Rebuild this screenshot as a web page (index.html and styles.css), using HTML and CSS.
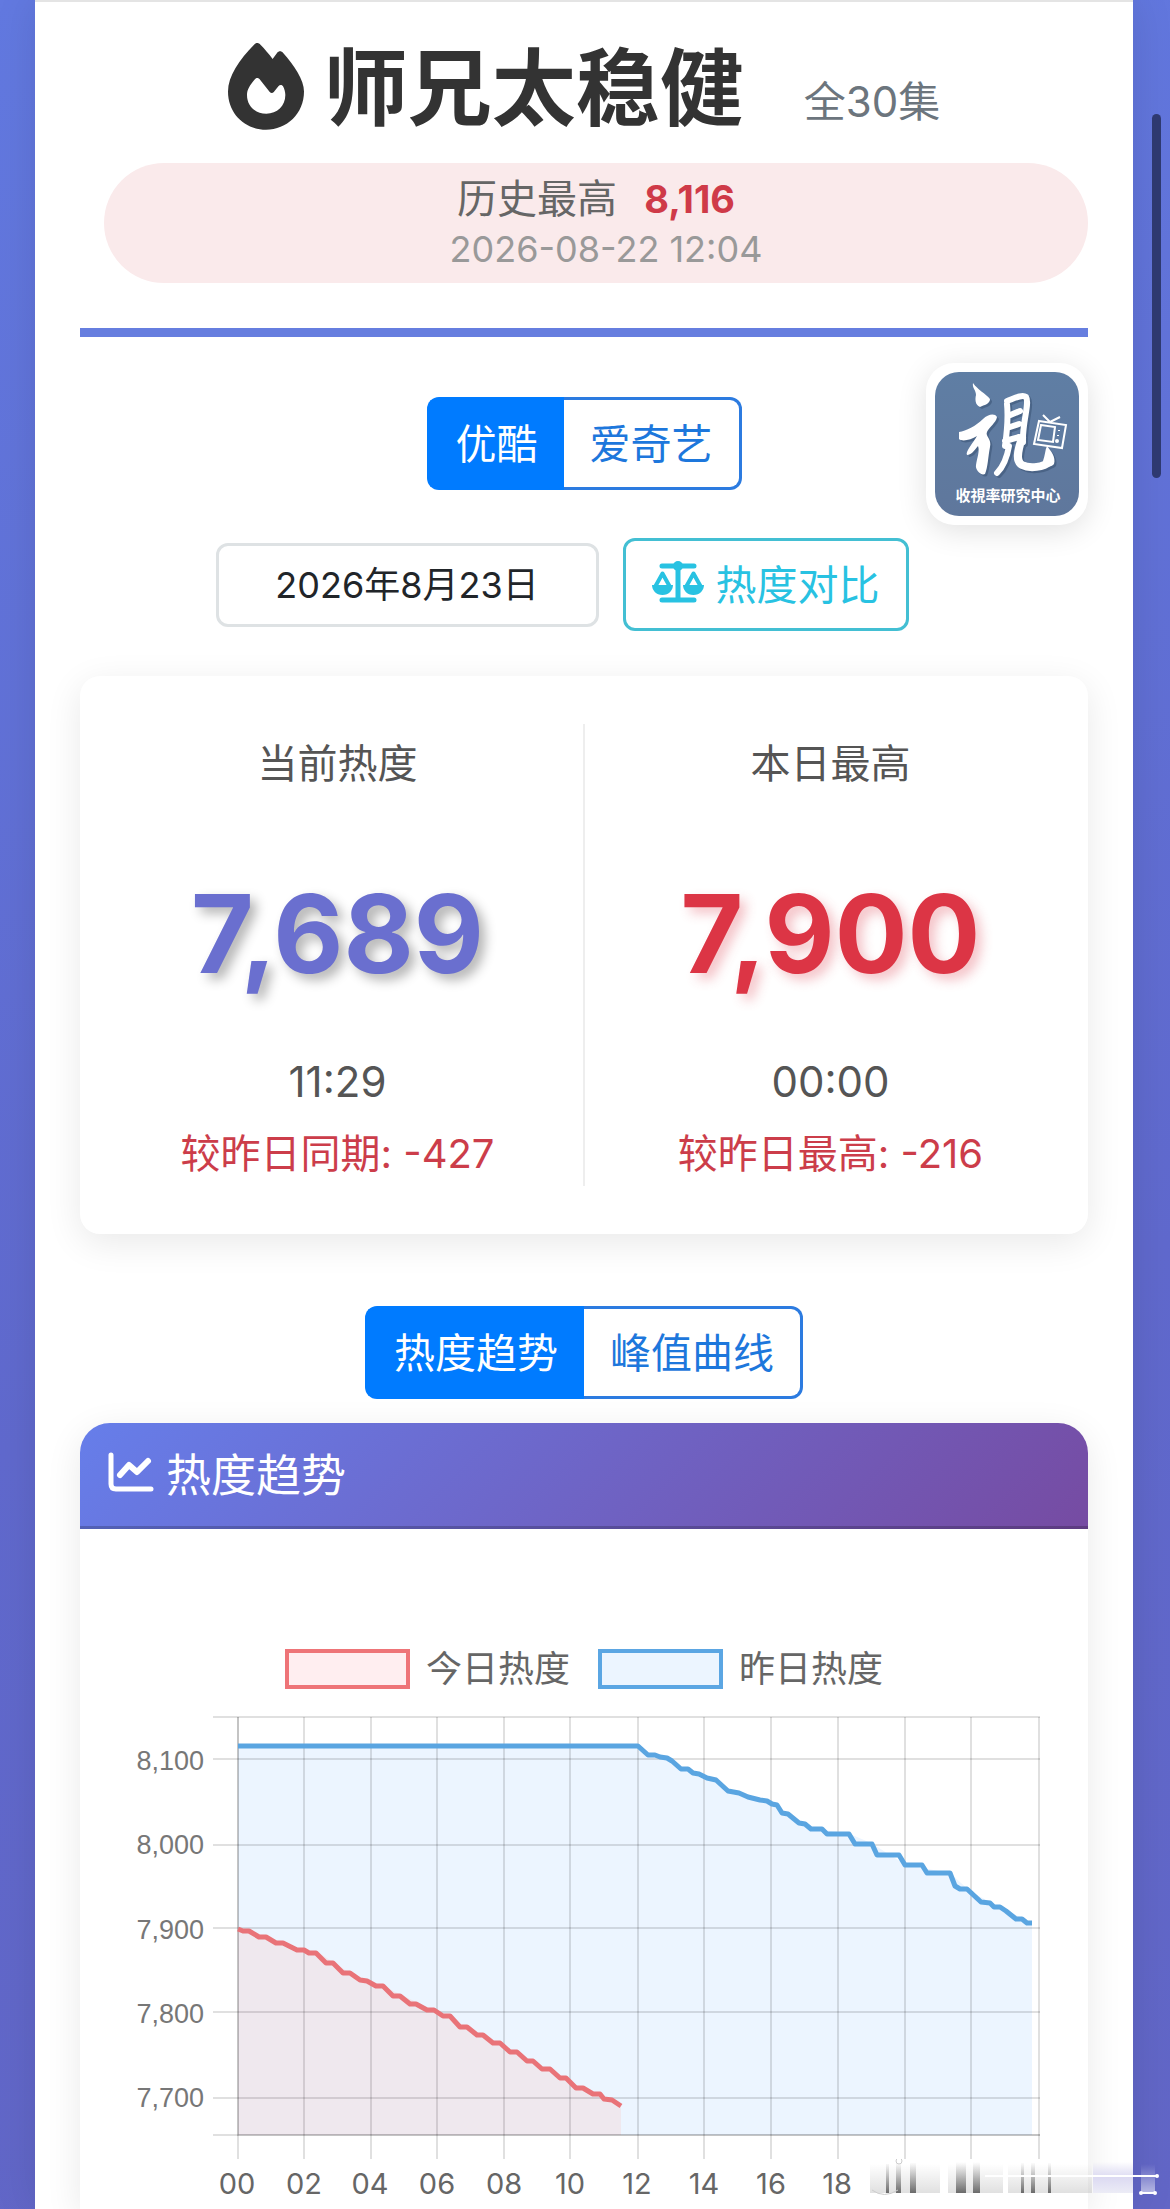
FILE: index.html
```html
<!DOCTYPE html>
<html lang="zh-CN">
<head>
<meta charset="utf-8">
<meta name="viewport" content="width=device-width">
<title>师兄太稳健 热度</title>
<link rel="stylesheet" href="styles.css">
</head>
<body>
<main class="page">
  <header class="head">
    <div class="title-row">
      <h1 class="title">
        <svg class="fire" viewBox="0 0 448 512" aria-hidden="true"><path fill="#333" fill-rule="evenodd" d="M155 9c9-12 25-12 35 0 25 26 50 54 73 85l27-37c9-12 25-12 34 0 66 73 124 160 124 229 0 131-101 225-224 225S0 418 0 286C0 196 67 98 155 9zM226 416c63 0 112-45 112-110 0-18-6-36-12-49-6-11-20-13-29-2l-27 34c-7 8-17 8-24 0l-56-72c-11-14-24-14-34-1-27 32-44 58-44 90 0 65 48 110 114 110z"/></svg>
        <span>师兄太稳健</span>
      </h1>
      <span class="episodes">全30集</span>
    </div>
    <div class="record">
      <div class="record-line">历史最高 <strong class="record-value">8,116</strong></div>
      <time class="record-time">2026-08-22 12:04</time>
    </div>
  </header>

  <section class="controls">
    <div class="segment">
      <button type="button" class="seg active">优酷</button>
      <button type="button" class="seg">爱奇艺</button>
    </div>
    <div class="filters">
      <input class="date" type="text" value="2026年8月23日" aria-label="日期">
      <button type="button" class="compare">
        <svg class="scale" viewBox="0 0 52 42" aria-hidden="true"><g fill="none" stroke="currentColor" stroke-linecap="round" stroke-linejoin="round"><path d="M10 5h32M10 39h32M26 5v33" stroke-width="5"/><path d="M3 26L10.500 12.500 18 26M34 26l7.500-13.500L49 26" stroke-width="4"/></g><g fill="currentColor"><circle cx="26" cy="5" r="5"/><path d="M0 24h21c0 5-4 10-10.500 10S0 29 0 24zM31 24h21c0 5-4 10-10.500 10S31 29 31 24z"/></g></svg>
        <span>热度对比</span>
      </button>
    </div>
    <div class="logo">
      <svg viewBox="0 0 144 144" role="img" aria-label="收視率研究中心">
        <defs><linearGradient id="lg" x1="0" y1="0" x2="0" y2="1"><stop offset="0" stop-color="#5f7ea4"/><stop offset="1" stop-color="#5f779c"/></linearGradient></defs>
        <rect width="144" height="144" rx="24" fill="url(#lg)"/>
        <use href="#brush" class="brush-shadow" x="2" y="2"/>
        <g id="brush" fill="currentColor" stroke="currentColor" stroke-linejoin="round" stroke-linecap="round">
          <path stroke="none" d="M38 11c4 6 13 11 17 16 0 5-6 6-10 8-5-2-5-8-4-12 0-5-4-7-3-12z"/>
          <path stroke="none" d="M24 60c7-1 17-6 24-13 5-5 12-6 14-2-1 6-8 10-10 15-2 4 5 7 3 15-2 10-2 20-5 27-4 2-10-4-9-9 1-7 4-14 2-19-4 5-7 9-11 9-2-3 6-12 10-19-6 4-15 6-18 3z"/>
          <path fill="none" stroke-width="6" d="M72 32c1 10 0 28-2 42M72 29c6-2 15-7 19-4 4 6-4 26-3 45M73 44l12-5M72 56l12-4M70 69l14-4M74 74c-2 12-5 20-12 27"/>
          <path fill="none" stroke-width="8" d="M87 66c-4 12-7 23 0 27 8 4 22 2 27-3"/>
          <path stroke="none" d="M108 89c2-5 2-11 4-15 4 5 9 11 7 18-3 4-9 3-11-3z"/>
        </g>
        <g fill="none" stroke="#fff" stroke-width="2"><path fill="#5e7ba1" d="M104 49l27 4-4 23-28-4zM115 50l-7-7M115 50l10-5"/><path d="M106 53l14 2-2 15-15-2z"/><path d="M124 58v1M123 63v1"/><circle cx="122" cy="69" r="1"/></g>
        <text x="73" y="129" text-anchor="middle" class="logo-text">收視率研究中心</text>
      </svg>
    </div>
  </section>

  <section class="stats">
    <div class="stat">
      <div class="label">当前热度</div>
      <div class="number now">7,689</div>
      <time class="at">11:29</time>
      <div class="diff">较昨日同期: -427</div>
    </div>
    <div class="stat">
      <div class="label">本日最高</div>
      <div class="number top">7,900</div>
      <time class="at">00:00</time>
      <div class="diff">较昨日最高: -216</div>
    </div>
  </section>

  <div class="segment tabs">
    <button type="button" class="seg active">热度趋势</button>
    <button type="button" class="seg">峰值曲线</button>
  </div>

  <section class="panel">
    <h2 class="panel-head">
      <svg class="trend" viewBox="0 0 46 40" aria-hidden="true"><g fill="none" stroke="#fff" stroke-width="5" stroke-linecap="round" stroke-linejoin="round"><path d="M3 3v29q0 5 5 5h35"/><path stroke-width="6" d="M12 23l9-10 8 7L40 9"/></g></svg>
      <span>热度趋势</span>
    </h2>
    <div class="legend">
      <span class="key"><i class="swatch today"></i>今日热度</span>
      <span class="key"><i class="swatch yesterday"></i>昨日热度</span>
    </div>
    <svg class="chart" viewBox="80 1700 1008 509" role="img" aria-label="热度趋势图">
      <path fill="#ecf5ff" d="M238 1746H638L648 1755 665 1758 681 1769 704 1778 716 1780 731 1792 771 1803 782 1813 811 1828 850 1834 871 1843 906 1865 950 1873 971 1892 1000 1907 1032 1923V2135H238z"/>
      <path fill="#efe8ee" d="M238 1929L302 1950 319 1953 350 1973 383 1986 437 2012 504 2048 570 2082 621 2106V2135H238z"/>
      <g fill="none" stroke="#000" stroke-opacity=".12" stroke-width="2">
        <path d="M213 1717H1040M213 1759H1040M213 1845H1040M213 1928H1040M213 2012H1040M213 2098H1040M213 2135H1040"/>
        <path d="M238 1717V2159M304 1717V2159M371 1717V2159M437 1717V2159M504 1717V2159M570 1717V2159M638 1717V2159M704 1717V2159M771 1717V2159M838 1717V2159M905 1717V2159M971 1717V2159M1039 1717V2159"/>
        <path d="M238 1717V2135H1040"/>
      </g>
      <path class="line blue" d="M238 1746H638L648 1755 655 1755 660 1757 667 1758 672 1761 681 1769 688 1769 693 1773 699 1774 707 1778 716 1780 728 1791 739 1793 748 1797 760 1800 767 1801 772 1804 777 1805 782 1813 788 1814 799 1823 805 1824 811 1829 822 1829 827 1834H849L855 1844H872L877 1855H899L905 1865H922L927 1873H950L955 1886 960 1889 967 1889 981 1902 990 1903 994 1907 1000 1907 1006 1911 1016 1919 1022 1919 1027 1923H1032"/>
      <path class="line red" d="M238 1929L243 1931 249 1931 259 1937 266 1937 276 1943 283 1943 297 1950 304 1950 309 1953 316 1953 326 1963 333 1963 343 1973 350 1973 360 1980 367 1981 376 1986 383 1986 393 1996 400 1996 410 2004 416 2004 427 2010 434 2010 443 2016 450 2016 460 2027 467 2027 477 2035 483 2035 493 2043 500 2043 510 2052 517 2052 527 2061 533 2061 542 2069 550 2069 560 2078 566 2078 576 2088 583 2088 593 2094 600 2094 604 2099 612 2100 621 2106"/>
      <g class="ylab"><text x="204" y="1770">8,100</text><text x="204" y="1854">8,000</text><text x="204" y="1939">7,900</text><text x="204" y="2023">7,800</text><text x="204" y="2107">7,700</text></g>
      <g class="xlab"><text x="237" y="2194">00</text><text x="304" y="2194">02</text><text x="370" y="2194">04</text><text x="437" y="2194">06</text><text x="504" y="2194">08</text><text x="570" y="2194">10</text><text x="637" y="2194">12</text><text x="704" y="2194">14</text><text x="771" y="2194">16</text><text x="837" y="2194">18</text></g>
    </svg>
  </section>
</main>
<svg class="watermark" viewBox="0 0 310 50" aria-hidden="true">
  <defs>
    <linearGradient id="fade" x1="0" y1="0" x2="0" y2="1"><stop offset="0" stop-color="#777" stop-opacity="0"/><stop offset="1" stop-color="#555" stop-opacity=".85"/></linearGradient>
    <linearGradient id="soft" x1="0" y1="0" x2="0" y2="1"><stop offset="0" stop-color="#bbb" stop-opacity="0"/><stop offset="1" stop-color="#bbb" stop-opacity=".45"/></linearGradient>
    <linearGradient id="haze" x1="0" y1="0" x2="0" y2="1"><stop offset="0" stop-color="#d8d6f0" stop-opacity="0"/><stop offset=".5" stop-color="#dcdaf2"/><stop offset="1" stop-color="#ececf6"/></linearGradient>
    <linearGradient id="glow" x1="0" y1="0" x2="0" y2="1"><stop offset="0" stop-color="#fff" stop-opacity="0"/><stop offset="1" stop-color="#fff" stop-opacity=".55"/></linearGradient>
  </defs>
  <path fill="url(#haze)" d="M233 3h40v31h-40z"/>
  <path fill="url(#soft)" d="M10 5h70v29H10zM88 5h55v29H88zM148 5h84v29h-84z"/>
  <path fill="url(#fade)" d="M26 5h3v29h-3zM36 3h5v31h-5zM50 4h6v30h-6zM96 3h10v31H96zM113 3h7v31h-7zM161 4h3v30h-3zM171 4h4v30h-4zM188 4h3v30h-3z"/>
  <path fill="url(#glow)" d="M281 5h14v29h-14z"/>
  <path fill="none" stroke="#fff" stroke-width="2" d="M125 17h172M281 34h14"/>
  <path fill="none" stroke="#ccc" d="M12 31q12 9 26 0"/>
  <g fill="#fff"><circle cx="297" cy="17" r="2"/><circle cx="281" cy="34" r="2"/><circle cx="295" cy="34" r="2"/><circle cx="39" cy="2" r="3" stroke="#ccc"/></g>
</svg>
<div class="scrollbar" aria-hidden="true"></div>
</body>
</html>
```
FILE: styles.css
```css
* { box-sizing: border-box; }
body {
  position: relative;
  margin: 0;
  padding: 0 37px 0 35px;
  min-height: 100vh;
  font-family: Inter, "Noto Sans CJK SC", sans-serif;
  color: #555;
  background: linear-gradient(170deg, #6279e0 0%, #6069cd 60%, #6266c6 100%);
}
button, input { font: inherit; margin: 0; }
.page {
  min-height: 100vh;
  padding: 0 45px;
  background: #fff;
  border-top: 2px solid #e4e4e4;
  box-shadow: 0 0 40px rgba(0, 0, 0, .1);
}
.head {
  height: 335px;
  border-bottom: 9px solid #667edf;
}
.title-row {
  display: flex;
  justify-content: center;
  align-items: flex-end;
  gap: 60px;
  padding-top: 24px;
}
.title {
  display: flex;
  align-items: center;
  gap: 20px;
  margin: 0;
  font-size: 84px;
  line-height: 126px;
  font-weight: 700;
  color: #333;
}
.fire { width: 76px; height: 87px; margin-bottom: 6px; }
.episodes {
  padding-bottom: 20px;
  font-size: 42px;
  line-height: 60px;
  color: #6c757d;
}
.record {
  display: flex;
  flex-direction: column;
  align-items: center;
  justify-content: center;
  height: 120px;
  margin: 11px 0 0 24px;
  border-radius: 60px;
  background: #faeaeb;
}
.record-line { font-size: 40px; line-height: 52px; color: #666; white-space: pre; }
.record-value { margin-left: 16px; font-size: 38px; color: #cf3a48; }
.record-time { padding-left: 20px; font-size: 36px; line-height: 48px; color: #999; }

.controls { position: relative; padding-top: 60px; }
.segment { display: flex; width: max-content; margin: 0 auto; }
.seg {
  height: 93px;
  padding: 0 26px 6px;
  border: 3px solid #2c7be0;
  border-left-width: 0;
  border-radius: 0 12px 12px 0;
  background: #fff;
  color: #1d77dc;
  font-size: 41px;
}
.seg.active {
  border: 3px solid #007bff;
  border-right-width: 0;
  border-radius: 12px 0 0 12px;
  background: #007bff;
  color: #fff;
}
.filters {
  display: flex;
  justify-content: center;
  align-items: center;
  gap: 24px;
  margin: 48px 44px 0 0;
}
.date {
  width: 383px;
  height: 84px;
  padding: 0 0 6px;
  border: 3px solid #dee2e4;
  border-radius: 12px;
  background: #fff;
  color: #212529;
  font-size: 36px;
  text-align: center;
}
.compare {
  display: flex;
  align-items: center;
  gap: 12px;
  height: 93px;
  padding: 0 26px 6px;
  border: 3px solid #43bfd3;
  border-radius: 12px;
  background: #fff;
  color: #28c2e2;
  font-size: 41px;
}
.scale { width: 52px; height: 42px; }
.logo {
  position: absolute;
  top: 26px;
  right: 0;
  width: 162px;
  height: 162px;
  padding: 9px;
  border-radius: 28px;
  background: #fff;
  color: #fff;
  box-shadow: 0 6px 30px rgba(0, 0, 0, .12);
}
.logo svg { display: block; }
.brush-shadow { color: #3d5677; opacity: .6; }
.logo-text { font: 700 15px "Noto Sans CJK TC", sans-serif; fill: #fff; }

.stats {
  display: flex;
  margin-top: 45px;
  padding: 48px 12px;
  border-radius: 20px;
  background: #fff;
  box-shadow: 0 9px 36px rgba(0, 0, 0, .09);
}
.stat {
  flex: 1;
  display: flex;
  flex-direction: column;
  align-items: center;
  padding: 10px 0 2px;
}
.stat + .stat { border-left: 2px solid #eee; }
.label { font-size: 40px; line-height: 60px; }
.number {
  margin: 60px 0 44px;
  font-size: 108px;
  line-height: 160px;
  font-weight: 700;
}
.now { color: #6a6fcf; text-shadow: 6px 6px 12px rgba(0, 0, 0, .3); }
.top { color: #dc3545; text-shadow: 6px 6px 12px rgba(220, 53, 69, .3); }
.at { font-size: 42px; line-height: 48px; }
.diff { margin-top: 18px; font-size: 40px; line-height: 60px; color: #cc3d4a; }

.tabs { margin-top: 72px; }
.panel {
  margin-top: 24px;
  border-radius: 30px 30px 0 0;
  background: #fff;
  box-shadow: 0 9px 36px rgba(0, 0, 0, .09);
}
.panel-head {
  display: flex;
  align-items: center;
  gap: 12px;
  height: 106px;
  margin: 0;
  padding: 0 28px 5px;
  border-bottom: 3px solid rgba(0, 0, 0, .2);
  border-radius: 30px 30px 0 0;
  background: linear-gradient(135deg, #667eea 0%, #764ba2 100%) border-box;
  color: #fff;
  font-size: 45px;
  font-weight: 400;
}
.trend { width: 46px; height: 40px; }
.legend {
  display: flex;
  justify-content: center;
  gap: 28px;
  padding: 114px 0 5px;
}
.key { display: flex; align-items: center; gap: 16px; font-size: 36px; line-height: 52px; color: #666; }
.swatch { width: 125px; height: 40px; border: 4px solid; }
.today { border-color: #ee7478; background: #ffeef0; }
.yesterday { border-color: #5ba6e3; background: #ecf5ff; }
.chart { display: block; width: 100%; height: auto; }
.line { fill: none; stroke-width: 5; stroke-linejoin: round; }
.blue { stroke: #5aa5e1; }
.red { stroke: #e97378; }
.ylab { font: 27px "Liberation Sans", sans-serif; fill: #777; text-anchor: end; }
.xlab { font-size: 29px; fill: #666; text-anchor: middle; }
.watermark {
  position: absolute;
  right: 0;
  bottom: 0;
  width: 310px;
  height: 50px;
}
.scrollbar {
  position: absolute;
  top: 114px;
  right: 9px;
  width: 9px;
  height: 364px;
  border-radius: 5px;
  background: #2e3970;
}
```
